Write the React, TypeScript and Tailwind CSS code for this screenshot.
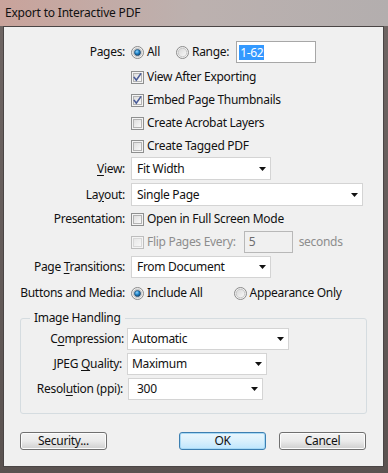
import React from "react";

const FONT = { fontFamily: '"Noto Sans", "Open Sans", Arial, sans-serif' };

function Check({ checked = false, disabled = false }: { checked?: boolean; disabled?: boolean }) {
  return (
    <svg width="13" height="13" viewBox="0 0 13 13" className="shrink-0">
      <defs>
        <linearGradient id={disabled ? "cbd" : "cb"} x1="0" y1="0" x2="1" y2="1">
          <stop offset="0" stopColor={disabled ? "#e6e6e6" : "#dcdcdc"} />
          <stop offset="1" stopColor={disabled ? "#f8f8f8" : "#fbfbfb"} />
        </linearGradient>
      </defs>
      <rect x="0.5" y="0.5" width="12" height="12" fill="#f4f4f4" stroke={disabled ? "#bdbdbd" : "#8e8f8f"} />
      <rect x="2.5" y="2.5" width="8" height="8" fill={`url(#${disabled ? "cbd" : "cb"})`} stroke={disabled ? "#d8d8d8" : "#b3b3b3"} />
      {checked && (
        <path d="M3.3 6.5 L5.3 9.2 L9.6 3" fill="none" stroke="#4a5c98" strokeWidth="1.6" strokeLinecap="square" />
      )}
    </svg>
  );
}

function Radio({ checked = false }: { checked?: boolean }) {
  return (
    <svg width="13" height="13" viewBox="0 0 13 13" className="shrink-0">
      <defs>
        <linearGradient id="rg" x1="0" y1="0" x2="1" y2="1">
          <stop offset="0" stopColor="#d6d6d6" />
          <stop offset="1" stopColor="#fafafa" />
        </linearGradient>
        <radialGradient id="rdot" cx="0.4" cy="0.35" r="0.7">
          <stop offset="0" stopColor="#8fd3ff" />
          <stop offset="0.5" stopColor="#1f84c8" />
          <stop offset="1" stopColor="#0f3f6a" />
        </radialGradient>
      </defs>
      <circle cx="6.5" cy="6.5" r="6" fill="#f2f2f2" stroke="#8a8a8a" />
      <circle cx="6.5" cy="6.5" r="4.3" fill="url(#rg)" stroke="#bdbdbd" strokeWidth="0.8" />
      {checked && <circle cx="6.5" cy="6.5" r="3.1" fill="url(#rdot)" stroke="#1d3e5e" strokeWidth="0.6" />}
    </svg>
  );
}

function Arrow() {
  return (
    <svg width="7" height="4" viewBox="0 0 7 4" className="shrink-0">
      <path d="M0 0 H7 L3.5 4 Z" fill="#111" />
    </svg>
  );
}

function Select({ text, w, pl = 5 }: { text: string; w: string; pl?: number }) {
  return (
    <div className={`${w} h-full flex items-center justify-between bg-white border border-[#d4d4d4] pr-[4px]`}>
      <span style={{ paddingLeft: pl }}>{text}</span>
      <Arrow />
    </div>
  );
}

function U({ children }: { children: React.ReactNode }) {
  return <span className="underline underline-offset-2 decoration-1">{children}</span>;
}

function Row({
  label,
  h = "h-[22px]",
  mt = "",
  children,
}: {
  label?: React.ReactNode;
  h?: string;
  mt?: string;
  children: React.ReactNode;
}) {
  return (
    <div className={`flex items-center ${h} ${mt}`}>
      <div className="w-[121px] text-right whitespace-nowrap">{label}</div>
      <div className="ml-[6px] flex items-center h-full">{children}</div>
    </div>
  );
}

function Btn({ children, def = false }: { children: React.ReactNode; def?: boolean }) {
  return (
    <div
      className={`w-[87px] h-[18px] flex items-center justify-center rounded-[3px] border ${
        def
          ? "border-[#3c7fb1] bg-gradient-to-b from-[#eaf6fd] via-[#d9f0fc] to-[#bee6fd] shadow-[inset_0_0_0_1px_#a7d9f5]"
          : "border-[#707070] bg-gradient-to-b from-[#f2f2f2] via-[#ebebeb] to-[#cfcfcf] shadow-[inset_0_0_0_1px_#fcfcfc]"
      }`}
    >
      {children}
    </div>
  );
}

export default function App() {
  return (
    <div
      className="w-[388px] h-[473px] overflow-hidden flex flex-col text-[12px] text-[#111] bg-gradient-to-b from-[#6f6664] to-[#5a5250]"
      style={FONT}
    >
      <div className="h-[26px] shrink-0 flex items-center pl-[5px] bg-gradient-to-r from-[#c9a39b] via-[#bcb1af] to-[#b3aeae] text-[#111] tracking-[-0.2px]">
        Export to Interactive PDF
      </div>
      <div className="ml-[3px] mr-[4px] h-[441px] shrink-0 bg-[#f0f0f0] border border-[#4a4545] flex flex-col tracking-[-0.3px]">
        <div className="pt-[14px] flex flex-col">
          <Row label="Pages:">
            <Radio checked />
            <span className="ml-[3px]">All</span>
            <span className="ml-[16px]">
              <Radio />
            </span>
            <span className="ml-[3px]">Range:</span>
            <div className="ml-[7px] w-[80px] h-full bg-white border border-[#a7a7a7] flex items-center pl-[2px]">
              <span className="bg-[#3399ff] text-white px-[1px] leading-[15px]">1-62</span>
            </div>
          </Row>
          <Row mt="mt-[3px]">
            <Check checked />
            <span className="ml-[3px]">View After Exporting</span>
          </Row>
          <Row mt="mt-[1px]">
            <Check checked />
            <span className="ml-[3px]">Embed Page Thumbnails</span>
          </Row>
          <Row mt="mt-[1px]">
            <Check />
            <span className="ml-[3px]">Create Acrobat Layers</span>
          </Row>
          <Row mt="mt-[1px]">
            <Check />
            <span className="ml-[3px]">Create Tagged PDF</span>
          </Row>
          <Row
            h="h-[23px]"
            label={
              <>
                <U>V</U>iew:
              </>
            }
          >
            <Select text="Fit Width" w="w-[140px]" />
          </Row>
          <Row
            h="h-[23px]"
            mt="mt-[3px]"
            label={
              <>
                La<U>y</U>out:
              </>
            }
          >
            <Select text="Single Page" w="w-[232px]" />
          </Row>
          <Row mt="mt-[2px]" label="Presentation:">
            <Check />
            <span className="ml-[3px]">Open in Full Screen Mode</span>
          </Row>
          <Row mt="mt-[1px]">
            <Check disabled />
            <span className="ml-[3px] text-[#8d8d8d]">Flip Pages Every:</span>
            <div className="ml-[8px] w-[49px] h-full border border-[#b8b8b8] flex items-center pl-[4px] text-[#6d6d6d]">
              5
            </div>
            <span className="ml-[6px] text-[#8d8d8d]">seconds</span>
          </Row>
          <Row
            mt="mt-[3px]"
            label={
              <>
                Page <U>T</U>ransitions:
              </>
            }
          >
            <Select text="From Document" w="w-[140px]" />
          </Row>
          <Row mt="mt-[4px]" label="Buttons and Media:">
            <Radio checked />
            <span className="ml-[3px]">Include All</span>
            <span className="ml-[31px]">
              <Radio />
            </span>
            <span className="ml-[3px]">Appearance Only</span>
          </Row>
        </div>

        <div className="relative ml-[16px] mt-[14px] w-[347px] h-[96px] border border-[#d5dce0] rounded-[3px] pt-[9px] flex flex-col">
          <span className="absolute left-[9px] top-[-9px] px-[4px] bg-[#f0f0f0] leading-[16px]">Image Handling</span>
          <div className="flex items-center h-[22px]">
            <div className="w-[103px] text-right">
              C<U>o</U>mpression:
            </div>
            <div className="ml-[3px] h-full flex">
              <Select text="Automatic" w="w-[162px]" pl={4} />
            </div>
          </div>
          <div className="flex items-center h-[22px] mt-[3px]">
            <div className="w-[101px] text-right">
              JPEG <U>Q</U>uality:
            </div>
            <div className="ml-[5px] h-full flex">
              <Select text="Maximum" w="w-[140px]" pl={4} />
            </div>
          </div>
          <div className="flex items-center h-[22px] mt-[3px]">
            <div className="w-[102px] text-right">
              Resol<U>u</U>tion (ppi):
            </div>
            <div className="ml-[5px] h-full flex">
              <Select text="300" w="w-[135px]" pl={8} />
            </div>
          </div>
        </div>

        <div className="flex items-center ml-[16px] mt-[18px]">
          <Btn>Security...</Btn>
          <div className="ml-[72px]">
            <Btn def>OK</Btn>
          </div>
          <div className="ml-[13px]">
            <Btn>Cancel</Btn>
          </div>
        </div>
      </div>
    </div>
  );
}
